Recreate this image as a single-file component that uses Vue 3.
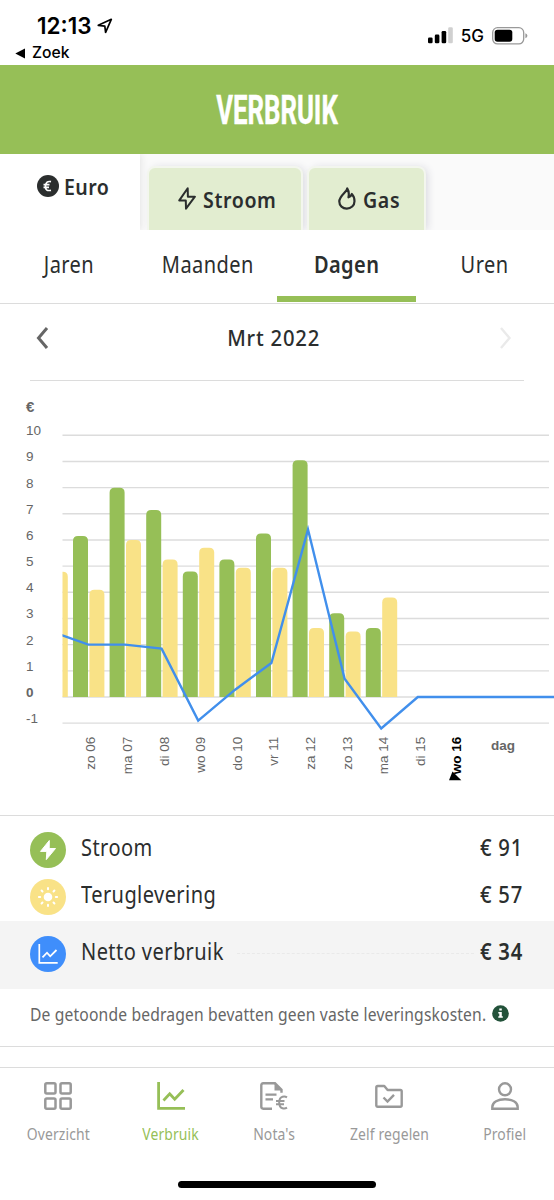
<script setup>
import { computed } from 'vue'

const sources = [
  { id: 'stroom', label: 'Stroom' },
  { id: 'gas', label: 'Gas' }
]

const periods = ['Jaren', 'Maanden', 'Dagen', 'Uren']
const activePeriod = 'Dagen'

const days = [
  { label: '', stroom: 0, terug: 4.79, netto: 2.5 },
  { label: 'zo 06', stroom: 6.15, terug: 4.1, netto: 2 },
  { label: 'ma 07', stroom: 8, terug: 6, netto: 2 },
  { label: 'di 08', stroom: 7.15, terug: 5.25, netto: 1.85 },
  { label: 'wo 09', stroom: 4.8, terug: 5.7, netto: -0.9 },
  { label: 'do 10', stroom: 5.25, terug: 4.94, netto: 0.27 },
  { label: 'vr 11', stroom: 6.25, terug: 4.94, netto: 1.3 },
  { label: 'za 12', stroom: 9.05, terug: 2.64, netto: 6.4 },
  { label: 'zo 13', stroom: 3.2, terug: 2.5, netto: 0.7 },
  { label: 'ma 14', stroom: 2.64, terug: 3.8, netto: -1.2 },
  { label: 'di 15', stroom: 0, terug: 0, netto: 0 },
  { label: 'wo 16', stroom: 0, terug: 0, netto: 0, today: true }
]

const ticks = [10, 9, 8, 7, 6, 5, 4, 3, 2, 1, 0, -1]

const STEP = 36.6
const ZERO = 316
const UNIT = 26.17

const dayX = (i) => 88.4 + (i - 1) * STEP
const valueY = (v) => ZERO - v * UNIT

// staaf met alleen bovenaan ronde hoeken
const barPath = (x, value) => {
  const y = valueY(value)
  return `M${x} ${ZERO}V${y + 5}q0 -5 5 -5h5q5 0 5 5V${ZERO}z`
}

const linePoints = computed(() =>
  days.map((d, i) => `${dayX(i)},${valueY(d.netto)}`).join(' ') + ` 560,${ZERO}`
)

const totals = [
  { id: 'stroom', label: 'Stroom', amount: '€ 91' },
  { id: 'terug', label: 'Teruglevering', amount: '€ 57' },
  { id: 'netto', label: 'Netto verbruik', amount: '€ 34' }
]
</script>

<template>
  <div class="app">
    <header class="status">
      <div class="status-left">
        <div class="clock">
          <span>12:13</span>
          <svg width="16" height="16" viewBox="0 0 16 16">
            <path d="M1.3 7.3 14.3 1.3 8.6 14.3 7.8 8.1z" fill="none" stroke="#000" stroke-width="1.7" stroke-linejoin="round" />
          </svg>
        </div>
        <div class="back">
          <svg width="11" height="11" viewBox="0 0 11 11"><path d="M0.3 5.5 10 .6v9.8z" /></svg>
          <span>Zoek</span>
        </div>
      </div>
      <div class="status-right">
        <svg width="25" height="17" viewBox="0 0 25 17">
          <rect x="0" y="10.5" width="4.6" height="5.7" rx="1.3" />
          <rect x="6.8" y="7.6" width="4.6" height="8.6" rx="1.3" />
          <rect x="13.6" y="4" width="4.6" height="12.2" rx="1.3" />
          <rect x="20.2" y="0.2" width="4.6" height="16" rx="1.3" fill="#d0d0d0" />
        </svg>
        <span class="network">5G</span>
        <svg width="36" height="18" viewBox="0 0 36 18">
          <rect x="0.7" y="0.7" width="31" height="16.2" rx="4.8" fill="none" stroke="#999" stroke-width="1.3" />
          <rect x="2.7" y="2.8" width="17.6" height="12" rx="2.8" />
          <path d="M33.4 6.3q2 .8 2 2.5t-2 2.5z" fill="#999" />
        </svg>
      </div>
    </header>

    <div class="title-bar"><h1>VERBRUIK</h1></div>

    <div class="source-tabs">
      <button class="source active">
        <svg width="22" height="22" viewBox="0 0 22 22">
          <circle cx="11" cy="11" r="11" fill="#2b2e2e" />
          <path d="M14 6.7Q9 5.5 8.5 11t5.5 4.3M6.500 9.700h6M6.500 12.300h5.500" fill="none" stroke="#fff" stroke-width="1.7" />
        </svg>
        <span class="text">Euro</span>
      </button>
      <button v-for="s in sources" :key="s.id" class="source" :class="s.id">
        <svg v-if="s.id === 'stroom'" width="18" height="24" viewBox="0 0 18 24">
          <path d="M9.700 1.200 1.300 13.400h6.500L8 21.700 16.900 9.700H9.900z" fill="none" stroke="#2b2e2e" stroke-width="2" stroke-linejoin="round" />
        </svg>
        <svg v-else width="18" height="24" viewBox="0 0 18 24">
          <path d="M9.200 1.300C9.300 5 1.300 8.500 1.300 14.600c0 4.200 3.300 7 7.500 7s7.700-3 7.700-7.300c0-3-1-5.500-2.700-7.300-.4 1.500-1.500 2.700-3.300 3.300.6-3.200.5-6.300-1.300-9z" fill="none" stroke="#2b2e2e" stroke-width="2.200" stroke-linejoin="round" />
        </svg>
        <span class="text">{{ s.label }}</span>
      </button>
    </div>

    <nav class="periods">
      <button v-for="p in periods" :key="p" class="period" :class="{ active: p === activePeriod }">
        <span class="text">{{ p }}</span>
      </button>
    </nav>

    <div class="month">
      <svg width="13" height="24" viewBox="0 0 13 24"><path d="M11 2 2.500 12 11 22" fill="none" stroke="#666" stroke-width="3" /></svg>
      <span class="text">Mrt 2022</span>
      <svg width="13" height="24" viewBox="0 0 13 24"><path d="M2 2l8.500 10L2 22" fill="none" stroke="#eaeaea" stroke-width="2.400" /></svg>
    </div>

    <svg class="chart" width="554" height="434" viewBox="0 0 554 434">
      <defs>
        <clipPath id="plot"><rect x="62.500" y="0" width="491.500" height="434" /></clipPath>
      </defs>
      <text class="axis bold euro" x="26" y="31">€</text>
      <g v-for="t in ticks" :key="t">
        <text class="axis" :class="{ bold: t === 0 }" x="26" :y="valueY(t)">{{ t }}</text>
        <line x1="62.500" x2="549" :y1="valueY(t)" :y2="valueY(t)" stroke="#dcdcdc" stroke-width="1.400" />
      </g>
      <g clip-path="url(#plot)">
        <g v-for="(d, i) in days" :key="i">
          <path v-if="d.stroom" :d="barPath(dayX(i) - 15.4, d.stroom)" fill="#96bf57" />
          <path v-if="d.terug" :d="barPath(dayX(i) + 1, d.terug)" fill="#f9e287" />
        </g>
        <polyline :points="linePoints" fill="none" stroke="#418fec" stroke-width="2.400" />
      </g>
      <text
        v-for="(d, i) in days"
        :key="d.label"
        class="axis day"
        :class="{ today: d.today }"
        :transform="`translate(${dayX(i) + 7} 355.7) rotate(-90)`"
      >{{ d.label }}</text>
      <path d="M449 399.300h12.300L452.500 390.500z" />
      <text class="axis bold" x="491" y="369">dag</text>
    </svg>

    <section class="totals">
      <div v-for="t in totals" :key="t.id" class="total" :class="t.id">
        <svg width="36" height="36" viewBox="0 0 36 36">
          <template v-if="t.id === 'stroom'">
            <circle cx="18" cy="18" r="18" fill="#96bf57" />
            <path d="M19.300 8.500 10.500 19.400h6.300l-.5 8.200L25.500 16.500h-6.300z" fill="#fff" stroke="#fff" stroke-width="1" stroke-linejoin="round" />
          </template>
          <template v-else-if="t.id === 'terug'">
            <circle cx="18" cy="18" r="18" fill="#f9e287" />
            <circle cx="18" cy="18" r="4.300" fill="#fff" />
            <path
              v-for="n in 8"
              :key="n"
              d="M18 8.900v1.300"
              :transform="`rotate(${n * 45} 18 18)`"
              stroke="#fff"
              stroke-width="2"
              stroke-linecap="round"
            />
          </template>
          <template v-else>
            <circle cx="18" cy="18" r="18" fill="#3f8efb" />
            <path d="M9.300 8v18.800h18.400" fill="none" stroke="#fff" stroke-width="1.700" />
            <path d="M12.500 21.300l4.500-4.600 3.200 3.600 6.300-6.300" fill="none" stroke="#fff" stroke-width="1.800" />
          </template>
        </svg>
        <span class="text name">{{ t.label }}</span>
        <span class="dots"></span>
        <span class="text amount">{{ t.amount }}</span>
      </div>
    </section>

    <div class="note">
      <span class="text">De getoonde bedragen bevatten geen vaste leveringskosten.</span>
      <svg width="17" height="17" viewBox="0 0 17 17">
        <circle cx="8.500" cy="8.500" r="8.300" fill="#23523a" />
        <path d="M7.300 3.600h2.500v2H7.300zM6.300 7h3.500v4.300h1v1.500H6.300v-1.500h1V8.500h-1z" fill="#fff" />
      </svg>
    </div>

    <footer class="tabbar">
      <a class="tab t1">
        <svg width="28" height="28" viewBox="0 0 28 28" fill="none" stroke="#999" stroke-width="2.500">
          <rect x="1.300" y="1.300" width="10.200" height="10.200" rx="1.500" />
          <rect x="16.500" y="1.300" width="10.200" height="10.200" rx="1.500" />
          <rect x="1.300" y="16.500" width="10.200" height="10.200" rx="1.500" />
          <rect x="16.500" y="16.500" width="10.200" height="10.200" rx="1.500" />
        </svg>
        <span class="text">Overzicht</span>
      </a>
      <a class="tab t2 active">
        <svg width="28" height="28" viewBox="0 0 28 28" fill="none" stroke="#96bf57" stroke-width="2.800">
          <path d="M1.600 0v26.400H28" />
          <path d="M6.500 18.500l6.200-6.600 5 5.400L26.500 8" />
        </svg>
        <span class="text">Verbruik</span>
      </a>
      <a class="tab t3">
        <svg width="28" height="28" viewBox="0 0 28 28">
          <path d="M12 26.700H3.200q-1.900 0-1.900-1.900V3.200q0-1.900 1.900-1.900H15l6.500 6.500v3" fill="none" stroke="#999" stroke-width="2.400" />
          <path d="M14.500 1v7.500H22zM5.500 11.500h11v2.300h-11zM5.500 16.300h7.500v2.300H5.500z" fill="#999" />
          <path d="M27 15.300q-2-1.300-4.500-.6-3.300 1-3.300 5.800t3.300 5.800q2.500.7 4.500-.6M16 19h8.500M16 22.300h8" fill="none" stroke="#999" stroke-width="2" />
        </svg>
        <span class="text">Nota's</span>
      </a>
      <a class="tab t4">
        <svg width="28" height="28" viewBox="0 0 28 28" fill="none" stroke="#999" stroke-width="2.400">
          <path d="M1.300 23.800V5.500q0-1.500 1.500-1.500h6.500l3.300 4h12.800q1.300 0 1.300 1.300v14q0 1.500-1.500 1.500H2.800q-1.500 0-1.500-1.500z" stroke-linejoin="round" />
          <path d="M8.500 15.500l4 4 6.500-6.700" />
        </svg>
        <span class="text">Zelf regelen</span>
      </a>
      <a class="tab t5">
        <svg width="28" height="28" viewBox="0 0 28 28" fill="none" stroke="#999" stroke-width="2.400">
          <circle cx="14" cy="7.300" r="6" />
          <path d="M1.300 26.700v-1.700C1.300 20 7 17.300 14 17.300S26.700 20 26.700 25v1.700z" />
        </svg>
        <span class="text">Profiel</span>
      </a>
    </footer>
    <div class="home"><i></i></div>
  </div>
</template>

<style>
body {
  margin: 0;
  background: #fff;
}
</style>

<style scoped>
.app {
  width: 554px;
  height: 1200px;
  overflow: hidden;
  background: #fff;
  color: #2b2e2e;
  font-family: 'Noto Sans', sans-serif;
}

.app * {
  box-sizing: border-box;
}

svg {
  display: block;
  flex: none;
}

button {
  border: 0;
  padding: 0;
  background: none;
  color: inherit;
  font: inherit;
}

.text {
  display: inline-block;
  white-space: nowrap;
  letter-spacing: 0.5px;
  transform: scaleX(0.87);
  transform-origin: 0 50%;
}

.status {
  height: 65px;
  display: flex;
  justify-content: space-between;
  color: #000;
  font-family: Inter, sans-serif;
}

.clock {
  display: flex;
  align-items: center;
  gap: 5px;
  padding: 11px 0 0 37px;
  font-size: 22.5px;
  font-weight: 600;
  line-height: 29px;
}

.back {
  display: flex;
  align-items: center;
  gap: 6px;
  padding: 4px 0 0 15px;
  font-size: 15.7px;
  font-weight: 500;
  line-height: 18px;
}

.status-right {
  display: flex;
  align-items: center;
  gap: 8px;
  padding: 6px 26px 0 0;
}

.network {
  font-size: 17px;
  font-weight: 500;
}

.title-bar {
  height: 88.5px;
  padding-top: 1px;
  display: flex;
  align-items: center;
  justify-content: center;
  background: #96bf57;
  color: #fff;
}

h1 {
  margin: 0;
  font-family: Roboto, sans-serif;
  font-size: 41.5px;
  font-weight: 700;
  line-height: 41px;
  -webkit-text-stroke: 0.5px #fff;
  transform: scaleX(0.62);
}

.source-tabs {
  height: 76.5px;
  display: flex;
  align-items: flex-end;
  gap: 8.5px;
  background: #fafafa;
  font-size: 22px;
  font-weight: 600;
  overflow: hidden;
}

.source {
  display: flex;
  align-items: center;
  gap: 7px;
  height: 62px;
  border-radius: 6px 6px 0 0;
  background: #e2edd0;
  box-shadow: 0 0 0 2px #f3f6ee, 3px 0 8px #d4d4dc;
}

.source.active {
  width: 140px;
  height: 76.5px;
  padding: 0 0 12px 37px;
  gap: 5px;
  border-radius: 0;
  background: #fff;
  box-shadow: 0 0 8px #ddd;
}

.source .text {
  transform: scaleX(0.89);
}

.source.stroom {
  width: 152px;
  padding: 0 0 0 29px;
}

.source.stroom .text {
  letter-spacing: 0.7px;
}

.source.gas {
  width: 115px;
  padding: 0 0 0 29px;
}

.source.gas .text {
  letter-spacing: 0.7px;
}

.periods {
  height: 73.5px;
  display: flex;
  border-bottom: 1.5px solid #dcdcdc;
}

.period {
  flex: 1;
  height: 72px;
  padding-bottom: 4px;
  font-size: 23px;
}

.period .text,
.month .text,
.tab .text {
  transform-origin: 50% 50%;
}

.period.active {
  border-bottom: 6px solid #96bf57;
  padding: 2px 0 0;
  font-weight: 600;
}

.month {
  height: 77px;
  margin: 0 30px;
  padding: 0 12px 8px 6px;
  display: flex;
  align-items: center;
  justify-content: space-between;
  border-bottom: 1.5px solid #dcdcdc;
  font-size: 22.5px;
  font-weight: 500;
}

.month .text {
  letter-spacing: 0.9px;
  transform: scaleX(0.9);
}

.chart {
  background: #fff;
}

.axis {
  font-family: 'Liberation Sans', sans-serif;
  font-size: 13.5px;
  fill: #666;
}

.bold {
  font-weight: 700;
}

.euro {
  font-size: 15px;
}

.day {
  text-anchor: end;
}

.today {
  font-weight: 700;
  fill: #000;
}

.totals {
  border-top: 1.5px solid #dcdcdc;
  padding-top: 10.5px;
}

.total {
  display: flex;
  align-items: center;
  height: 47.25px;
  padding: 0 32px 0 30px;
  font-size: 23px;
}

.name {
  margin: -5px 0 0 15px;
}

.amount {
  margin: -5px -1px 0 0;
  letter-spacing: 0.9px;
  transform: scaleX(0.88);
  transform-origin: 100% 50%;
  font-weight: 500;
}

.dots {
  flex: 1;
}

.netto {
  height: 68px;
  padding-bottom: 2px;
  background: #f4f4f4;
}

.netto .amount {
  font-weight: 600;
}

.netto .dots {
  margin-left: -8px;
  border-top: 1px dashed #e9e9e9;
}

.note {
  display: flex;
  align-items: center;
  height: 58px;
  padding: 0 0 7px 30px;
  border-bottom: 1.5px solid #dcdcdc;
  color: #666;
  font-size: 18px;
}

.note .text {
  width: 462px;
  letter-spacing: 0.17px;
}

.tabbar {
  height: 83px;
  margin-top: 20px;
  padding: 14px 0 0;
  display: flex;
  border-top: 1.5px solid #dcdcdc;
  color: #999;
  font-size: 16px;
}

.tab {
  display: flex;
  flex-direction: column;
  align-items: center;
  gap: 13px;
  line-height: 22px;
}

.tab .text {
  letter-spacing: 0.15px;
}

.tab.active {
  color: #96bf57;
}

.t1 { width: 116px; }
.t2 { width: 110px; }
.t3 { width: 96px; }
.t4 { width: 134px; }
.t5 { width: 98px; }

.home {
  display: flex;
  justify-content: center;
  padding-top: 31px;
}

.home i {
  width: 198px;
  height: 7.5px;
  border-radius: 4px;
  background: #000;
}
</style>
